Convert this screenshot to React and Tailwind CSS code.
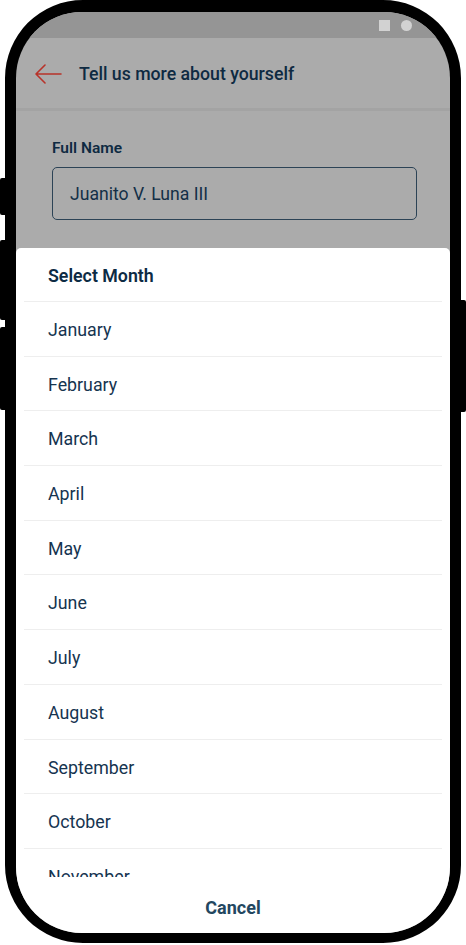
import React from "react";

const months = [
  "January","February","March","April","May","June","July","August","September","October","November","December",
];

export default function App() {
  return (
    <div className="relative w-[466px] h-[945px] bg-white overflow-hidden" style={{ fontFamily: "Roboto, 'Noto Sans', sans-serif" }}>
      {/* side buttons */}
      <div className="absolute left-0 top-[178px] w-[6px] h-[37px] bg-black rounded-l-[2px]" />
      <div className="absolute left-0 top-[240px] w-[6px] h-[80px] bg-black rounded-l-[2px]" />
      <div className="absolute left-0 top-[327px] w-[6px] h-[83px] bg-black rounded-l-[2px]" />
      <div className="absolute right-0 top-[300px] w-[6px] h-[112px] bg-black rounded-r-[2px]" />

      {/* phone body */}
      <div className="ml-[5px] w-[456px] h-[943px] bg-black rounded-[78px] border-t-[12px] border-b-[10px] border-x-[11px] border-black">
        <div className="w-full h-full rounded-[66px] overflow-hidden bg-[#ababab] flex flex-col">
          {/* status bar */}
          <div className="h-[26px] shrink-0 bg-[#959595] flex items-center justify-end gap-[11px] pr-[38px]">
            <div className="w-[11px] h-[11px] bg-[#d2d2d2]" />
            <div className="w-[11px] h-[11px] rounded-full bg-[#d2d2d2]" />
          </div>
          {/* header */}
          <div className="h-[73px] shrink-0 flex items-center pl-[18px] border-b-[3px] border-[#a3a3a3]">
            <svg width="28" height="20" viewBox="0 0 28 20" fill="none" className="mt-[2px]">
              <path d="M27 10H2M11 1L2 10l9 9" stroke="#b8332a" strokeWidth="1.6" strokeLinecap="round" strokeLinejoin="round" />
            </svg>
            <span className="ml-[17px] mt-[4px] text-[17.7px] font-medium text-[#0e2a42] leading-none">Tell us more about yourself</span>
          </div>
          {/* form */}
          <div className="h-[137px] shrink-0 pl-[36px] pr-[33px] pt-[28px]">
            <div className="text-[15.5px] font-semibold text-[#0e2a42] leading-[18px]">Full Name</div>
            <div className="mt-[10px] h-[53px] w-[365px] rounded-[5px] border-[1.5px] border-[#2c4356] flex items-center pl-[17px]">
              <span className="text-[17.6px] text-[#132f47] mt-[2px]">Juanito V. Luna III</span>
            </div>
          </div>
          {/* sheet */}
          <div className="flex-1 min-h-0 bg-white rounded-t-[5px] flex flex-col">
            <div className="h-[54px] shrink-0 mx-[8px] border-b border-[#eeeeee] flex items-center pl-[24px] pt-[4px]">
              <span className="text-[17.8px] font-semibold text-[#0d2b44]">Select Month</span>
            </div>
            <div className="h-[575px] shrink-0 overflow-hidden">
              {months.map((m) => (
                <div key={m} className="h-[54.7px] mx-[8px] border-b border-[#eeeeee] flex items-center pl-[24px] pt-[3px]">
                  <span className="text-[17.8px] text-[#163450]">{m}</span>
                </div>
              ))}
            </div>
            <div className="flex-1 flex justify-center pt-[20px]">
              <span className="text-[18px] font-bold text-[#23475f] leading-[22px]">Cancel</span>
            </div>
          </div>
        </div>
      </div>
    </div>
  );
}
